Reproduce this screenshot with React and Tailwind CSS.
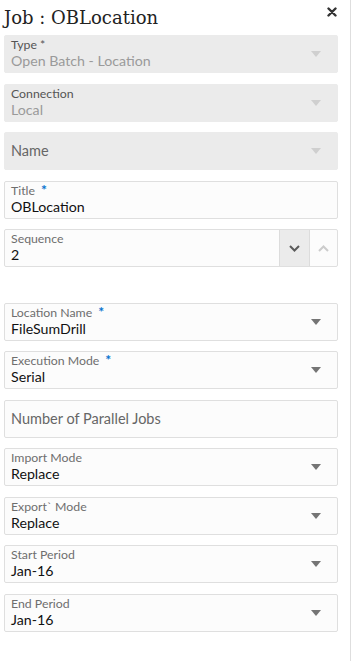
import React from "react";

const Arrow = ({ disabled }) => (
  <svg width="10" height="6" viewBox="0 0 10 6" className="shrink-0">
    <path d="M0 0 L10 0 L5 6 Z" fill={disabled ? "#cfcfcf" : "#757575"} />
  </svg>
);

const Star = () => (
  <span className="ml-[6px] text-[#0572ce] text-[14px] leading-[12px] font-bold">*</span>
);

function Field({ label, value, required, disabled, select = true, placeholder }) {
  const box = disabled
    ? "bg-[#ebebeb] border border-[#ebebeb]"
    : "bg-[#fcfcfc] border border-[#dfdfdf]";
  return (
    <div className={`h-[38px] rounded-[2px] ${box} flex items-center pl-[6px] pr-[16px]`}>
      <div className="flex-1 min-w-0">
        {placeholder ? (
          <div className="text-[14.5px] text-[#666]">{placeholder}</div>
        ) : (
          <>
            <div className={`text-[12.3px] leading-[14px] flex items-start ${disabled ? "text-[#555]" : "text-[#6e6e6e]"}`}>
              {label}
              {required && <Star />}
            </div>
            <div className={`text-[14.2px] leading-[18px] ${disabled ? "text-[#9a9a9a]" : "text-[#111]"}`}>
              {value}
            </div>
          </>
        )}
      </div>
      {select && <Arrow disabled={disabled} />}
    </div>
  );
}

export default function App() {
  return (
    <div className="w-[364px] h-[661px] bg-white relative overflow-hidden font-['Lato','Open_Sans',sans-serif]">
      <div className="absolute left-[350px] top-0 bottom-0 w-px bg-[#dedede]" />
      <div className="w-[350px] pl-[4px] pr-[12px]">
        <div className="h-[35px] flex items-start justify-between">
          <h1
            className="text-[18px] font-normal text-[#222] mt-[6px] leading-[24px]"
            style={{ fontFamily: '"DejaVu Serif", "Liberation Serif", serif' }}
          >
            Job : OBLocation
          </h1>
          <svg width="10" height="10" viewBox="0 0 10 10" className="mt-[7px] mr-[1px]">
            <path d="M1.5 1.5 L8.5 8.5 M8.5 1.5 L1.5 8.5" stroke="#333" strokeWidth="2.4" strokeLinecap="round" />
          </svg>
        </div>
        <div className="flex flex-col gap-[10.5px]">
          <Field label="Type *" value="Open Batch - Location" disabled />
          <Field label="Connection" value="Local" disabled />
          <Field placeholder="Name" disabled />
          <Field label="Title" value="OBLocation" required select={false} />
          <div className="h-[38px] rounded-[2px] bg-[#fcfcfc] border border-[#dfdfdf] flex">
            <div className="flex-1 pl-[6px] flex flex-col justify-center">
              <div className="text-[12.3px] leading-[14px] text-[#6e6e6e]">Sequence</div>
              <div className="text-[14.2px] leading-[18px] text-[#111]">2</div>
            </div>
            <div className="w-[30px] bg-[#ebebeb] border-l border-[#dcdcdc] flex items-center justify-center">
              <svg width="11" height="7" viewBox="0 0 11 7">
                <path d="M1 1 L5.5 5.5 L10 1" stroke="#5a5a5a" strokeWidth="2" fill="none" />
              </svg>
            </div>
            <div className="w-[28px] border-l border-[#dcdcdc] flex items-center justify-center">
              <svg width="11" height="7" viewBox="0 0 11 7">
                <path d="M1 6 L5.5 1.5 L10 6" stroke="#cccccc" strokeWidth="2" fill="none" />
              </svg>
            </div>
          </div>
          <div className="h-[25px]" />
        </div>
        <div className="flex flex-col gap-[10.5px]">
          <Field label="Location Name" value="FileSumDrill" required />
          <Field label="Execution Mode" value="Serial" required />
          <Field placeholder="Number of Parallel Jobs" select={false} />
          <Field label="Import Mode" value="Replace" />
          <Field label="Export` Mode" value="Replace" />
          <Field label="Start Period" value="Jan-16" />
          <Field label="End Period" value="Jan-16" />
        </div>
      </div>
    </div>
  );
}
